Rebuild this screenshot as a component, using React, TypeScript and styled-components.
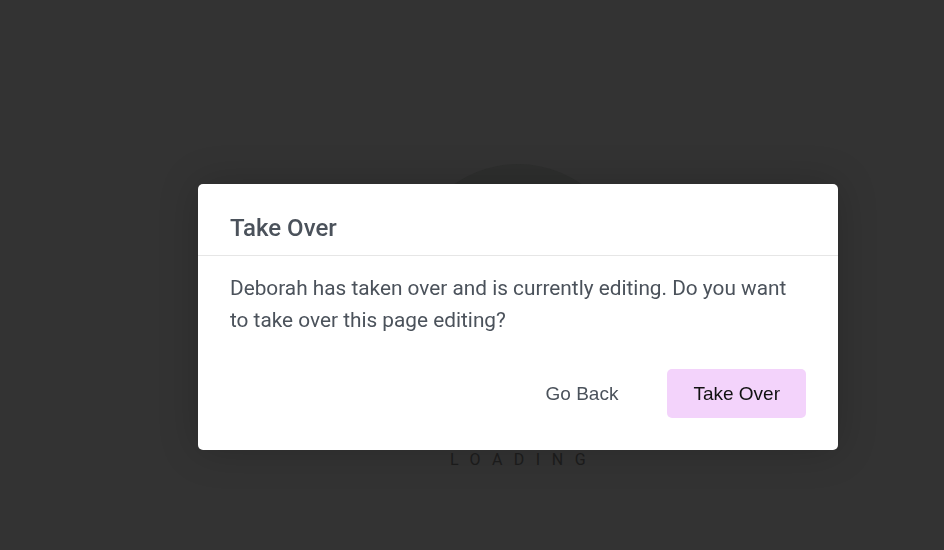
import React from 'react';
import styled, { createGlobalStyle } from 'styled-components';

const GlobalStyle = createGlobalStyle`
  html, body {
    margin: 0;
    padding: 0;
    background: #333333;
    font-family: Roboto, 'Liberation Sans', sans-serif;
  }
  * {
    box-sizing: border-box;
  }
`;

const StyledPage = styled.div`
  width: 100%;
  height: 100vh;
  overflow: hidden;
  display: flex;
  align-items: center;
  justify-content: center;
  padding: 84px 0 0 92px;
`;

const StyledLoader = styled.div`
  display: flex;
  flex-direction: column;
  align-items: center;
`;

const StyledSpinner = styled.div`
  width: 222px;
  height: 222px;
  border-radius: 50%;
  background: #2e2f2e;
`;

const StyledLoadingText = styled.p`
  margin: 64px 0 0 0;
  padding-left: 11px;
  font-size: 16px;
  line-height: 20px;
  letter-spacing: 11.5px;
  color: #1d1d1d;
`;

const StyledOverlay = styled.div`
  position: fixed;
  inset: 0;
  display: flex;
  align-items: center;
  justify-content: center;
  padding: 84px 0 0 92px;
`;

const StyledDialog = styled.div`
  width: 640px;
  background: #ffffff;
  border-radius: 5px;
  box-shadow: 0 0 40px rgba(0, 0, 0, 0.2);
`;

const StyledHeader = styled.div`
  height: 72px;
  padding: 16px 32px 0 32px;
  display: flex;
  align-items: center;
  border-bottom: 1px solid #e6e6e6;
`;

const StyledTitle = styled.h2`
  margin: 0;
  font-size: 24px;
  font-weight: 500;
  color: #4b525b;
`;

const StyledBody = styled.div`
  padding: 16px 32px 32px 32px;
`;

const StyledMessage = styled.p`
  margin: 0;
  font-size: 20.8px;
  line-height: 32px;
  color: #4b525b;
`;

const StyledActions = styled.div`
  margin-top: 33px;
  display: flex;
  justify-content: flex-end;
  gap: 23px;
`;

interface StyledButtonType {
  primary?: boolean;
}

const StyledButton = styled.button<StyledButtonType>`
  height: 49px;
  padding: 0 26px;
  border: none;
  border-radius: 5px;
  font-family: 'Liberation Sans', Arial, sans-serif;
  font-size: 19px;
  cursor: pointer;
  background: ${(props) => (props.primary ? '#f3d3fb' : 'transparent')};
  color: ${(props) => (props.primary ? '#111111' : '#4b525b')};
`;

const App = () => {
  return (
    <>
      <GlobalStyle />
      <StyledPage>
        <StyledLoader>
          <StyledSpinner />
          <StyledLoadingText>LOADING</StyledLoadingText>
        </StyledLoader>
      </StyledPage>
      <StyledOverlay>
        <StyledDialog role="dialog">
          <StyledHeader>
            <StyledTitle>Take Over</StyledTitle>
          </StyledHeader>
          <StyledBody>
            <StyledMessage>
              Deborah has taken over and is currently editing. Do you want to
              take over this page editing?
            </StyledMessage>
            <StyledActions>
              <StyledButton>Go Back</StyledButton>
              <StyledButton primary>Take Over</StyledButton>
            </StyledActions>
          </StyledBody>
        </StyledDialog>
      </StyledOverlay>
    </>
  );
};

export default App;
